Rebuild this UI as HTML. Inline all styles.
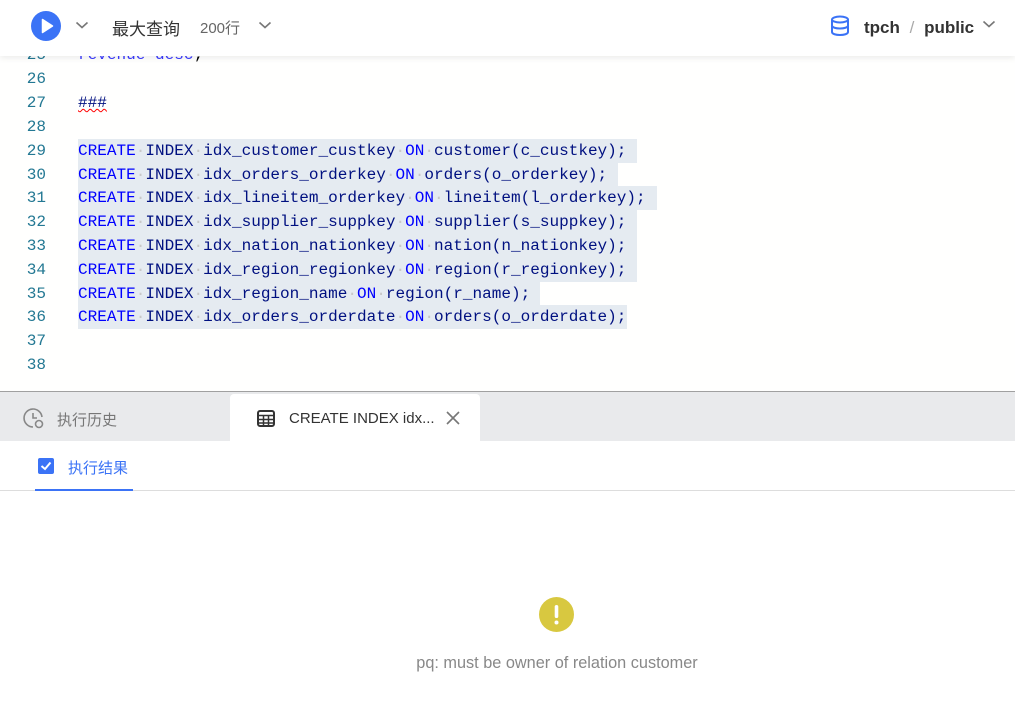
<!DOCTYPE html>
<html><head><meta charset="utf-8"><style>
*{margin:0;padding:0;box-sizing:border-box}
body{width:1015px;height:711px;overflow:hidden;background:#fff;font-family:"Liberation Sans","Noto Sans CJK SC",sans-serif;position:relative}
.hdr{position:absolute;left:0;top:0;width:1015px;height:56px;background:#fff;box-shadow:0 2px 6px rgba(0,0,0,.08);z-index:5}
.code{position:absolute;left:0;top:0;width:1015px;height:391px;background:#fffffe;overflow:hidden;font-family:"Liberation Mono",monospace;font-size:16.05px}
.ln{position:absolute;left:0;width:46px;text-align:right;color:#237893;height:24px;line-height:24px}
.tx{position:absolute;left:78px;height:24px;line-height:24px;white-space:pre;color:#001080}
.sel{position:absolute;left:78px;height:24px;background:#e5ebf1}
.k{color:#0000ff}.d{color:#c8c8c8}
.tabs{position:absolute;left:0;top:391px;width:1015px;height:50px;background:#e9eaec;border-top:1px solid #a0a0a0}
</style></head><body>
<div class="code">
<div class="sel" style="top:139px;width:559px"></div>
<div class="sel" style="top:163px;width:540px"></div>
<div class="sel" style="top:186px;width:579px"></div>
<div class="sel" style="top:210px;width:559px"></div>
<div class="sel" style="top:234px;width:559px"></div>
<div class="sel" style="top:258px;width:559px"></div>
<div class="sel" style="top:282px;width:462px"></div>
<div class="sel" style="top:305px;width:549px"></div>
<div class="ln" style="top:43px">25</div><div class="tx" style="top:43px;color:#3a3aff">revenue desc<span style="color:#000">;</span></div>
<div class="ln" style="top:67px">26</div>
<div class="ln" style="top:91px">27</div><div class="tx" style="top:91px;color:#001080;text-decoration:underline wavy red;text-decoration-thickness:1px">###</div>
<div class="ln" style="top:115px">28</div>
<div class="ln" style="top:139px">29</div><div class="tx" style="top:139px"><span class="k">CREATE</span><span class="d">·</span>INDEX<span class="d">·</span>idx_customer_custkey<span class="d">·</span><span class="k">ON</span><span class="d">·</span>customer(c_custkey);</div>
<div class="ln" style="top:163px">30</div><div class="tx" style="top:163px"><span class="k">CREATE</span><span class="d">·</span>INDEX<span class="d">·</span>idx_orders_orderkey<span class="d">·</span><span class="k">ON</span><span class="d">·</span>orders(o_orderkey);</div>
<div class="ln" style="top:186px">31</div><div class="tx" style="top:186px"><span class="k">CREATE</span><span class="d">·</span>INDEX<span class="d">·</span>idx_lineitem_orderkey<span class="d">·</span><span class="k">ON</span><span class="d">·</span>lineitem(l_orderkey);</div>
<div class="ln" style="top:210px">32</div><div class="tx" style="top:210px"><span class="k">CREATE</span><span class="d">·</span>INDEX<span class="d">·</span>idx_supplier_suppkey<span class="d">·</span><span class="k">ON</span><span class="d">·</span>supplier(s_suppkey);</div>
<div class="ln" style="top:234px">33</div><div class="tx" style="top:234px"><span class="k">CREATE</span><span class="d">·</span>INDEX<span class="d">·</span>idx_nation_nationkey<span class="d">·</span><span class="k">ON</span><span class="d">·</span>nation(n_nationkey);</div>
<div class="ln" style="top:258px">34</div><div class="tx" style="top:258px"><span class="k">CREATE</span><span class="d">·</span>INDEX<span class="d">·</span>idx_region_regionkey<span class="d">·</span><span class="k">ON</span><span class="d">·</span>region(r_regionkey);</div>
<div class="ln" style="top:282px">35</div><div class="tx" style="top:282px"><span class="k">CREATE</span><span class="d">·</span>INDEX<span class="d">·</span>idx_region_name<span class="d">·</span><span class="k">ON</span><span class="d">·</span>region(r_name);</div>
<div class="ln" style="top:305px">36</div><div class="tx" style="top:305px"><span class="k">CREATE</span><span class="d">·</span>INDEX<span class="d">·</span>idx_orders_orderdate<span class="d">·</span><span class="k">ON</span><span class="d">·</span>orders(o_orderdate);</div>
<div class="ln" style="top:329px">37</div>
<div class="ln" style="top:353px">38</div>
</div>
<div class="hdr">
<svg style="position:absolute;left:31px;top:11px" width="30" height="30" viewBox="0 0 30 30"><circle cx="15" cy="15" r="15" fill="#3b73f6"/><path d="M11.5 8.5 L21.5 15 L11.5 21.5 Z" fill="#fff" stroke="#fff" stroke-width="1.5" stroke-linejoin="round"/></svg>
<svg style="position:absolute;left:75px;top:20px" width="14" height="10"><path d="M1.5 2.5 L7 7.5 L12.5 2.5" fill="none" stroke="#777" stroke-width="1.6"/></svg>
<div style="position:absolute;left:112px;top:15px;font-size:17px;color:#333">最大查询</div>
<div style="position:absolute;left:200px;top:17px;font-size:15px;color:#666">200行</div>
<svg style="position:absolute;left:258px;top:20px" width="14" height="10"><path d="M1.5 2.5 L7 7.5 L12.5 2.5" fill="none" stroke="#777" stroke-width="1.6"/></svg>
<svg style="position:absolute;left:830px;top:15px" width="20" height="22" viewBox="0 0 20 22"><g fill="none" stroke="#3b73f6" stroke-width="2"><ellipse cx="10" cy="4.5" rx="8" ry="3"/><path d="M2 4.5 V17 C2 19 6 20 10 20 C14 20 18 19 18 17 V4.5 M2 10.5 C2 12.5 6 13.5 10 13.5 C14 13.5 18 12.5 18 10.5"/></g></svg>
<div style="position:absolute;left:864px;top:18px;font-size:17px;font-weight:bold;color:#333">tpch <span style="color:#aaa;font-weight:normal;margin:0 5px">/</span> public</div>
<svg style="position:absolute;left:982px;top:19px" width="14" height="10"><path d="M1.5 2.5 L7 7.5 L12.5 2.5" fill="none" stroke="#777" stroke-width="1.6"/></svg>
</div>
<div class="tabs">
<svg style="position:absolute;left:23px;top:16px" width="22" height="22" viewBox="0 0 22 22"><g fill="none" stroke="#888" stroke-width="1.6"><path d="M19 9 A9 9 0 1 0 10 19"/><path d="M10 5 V10 H14"/><circle cx="16" cy="16" r="3.5"/></g></svg>
<div style="position:absolute;left:57px;top:17px;font-size:15px;color:#777">执行历史</div>
<div style="position:absolute;left:230px;top:2px;width:250px;height:48px;background:#fff;border-radius:4px 4px 0 0">
<svg style="position:absolute;left:27px;top:16px" width="18" height="17" viewBox="0 0 18 17"><rect x="1" y="1" width="16" height="15" rx="2" fill="none" stroke="#333" stroke-width="2"/><path d="M1 5.5H17M1 9.5H17M1 13H17M6.5 5.5V16M11.5 5.5V16" stroke="#333" stroke-width="1.5"/></svg>
<div style="position:absolute;left:59px;top:16px;font-size:15px;color:#333">CREATE INDEX idx...</div>
<svg style="position:absolute;left:216px;top:17px" width="14" height="14"><path d="M1 1L13 13M13 1L1 13" stroke="#777" stroke-width="1.6"/></svg>
</div>
</div>
<div style="position:absolute;left:0;top:490px;width:1015px;height:1px;background:#ddd"></div>
<svg style="position:absolute;left:38px;top:458px" width="16" height="16" viewBox="0 0 16 16"><rect x="0" y="0" width="16" height="16" rx="2" fill="#3b73f6"/><path d="M3.5 8 L7 11 L12.5 4.5" fill="none" stroke="#fff" stroke-width="2"/></svg>
<div style="position:absolute;left:68px;top:457px;font-size:15px;color:#3b73f6">执行结果</div>
<div style="position:absolute;left:35px;top:489px;width:98px;height:2px;background:#3b73f6"></div>
<svg style="position:absolute;left:539px;top:597px" width="35" height="35"><circle cx="17.5" cy="17.5" r="17.5" fill="#d8c840"/><rect x="15.7" y="8" width="3.6" height="13" rx="1.8" fill="#fff"/><circle cx="17.5" cy="25.5" r="2" fill="#fff"/></svg>
<div style="position:absolute;left:0;width:1114px;top:654px;text-align:center;font-size:16.3px;color:#888">pq: must be owner of relation customer</div>
</body></html>
